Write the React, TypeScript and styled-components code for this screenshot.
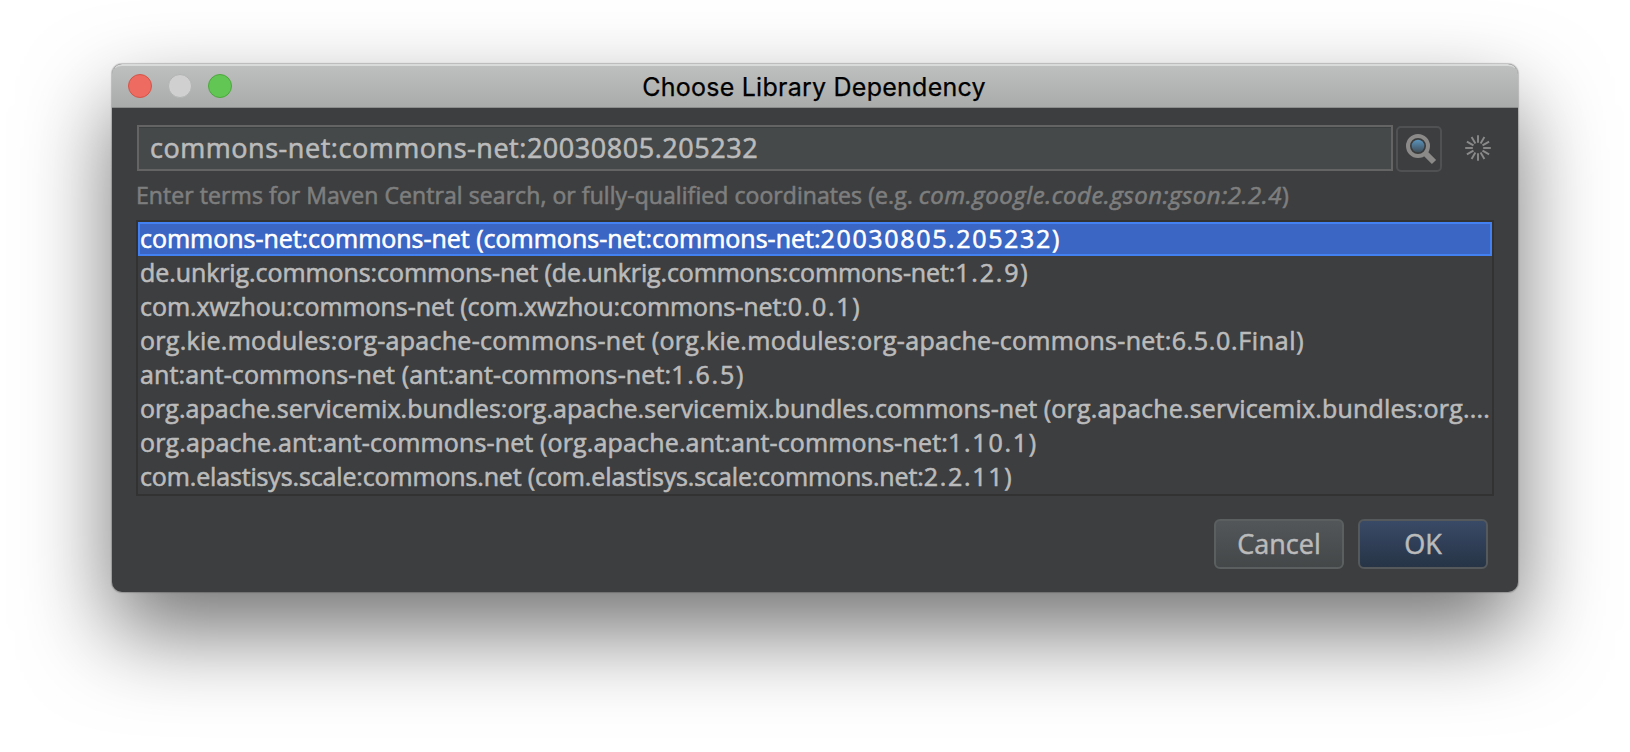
import React from "react";
import styled, { createGlobalStyle } from "styled-components";

const GlobalStyle = createGlobalStyle`
  * { box-sizing: border-box; }
  body { margin: 0; background: #fff; overflow: hidden; }
`;

const uiFont = `"Open Sans", "Noto Sans", sans-serif`;

const Desktop = styled.main`
  width: 1630px;
  height: 752px;
  padding: 64px 112px 0;
  background: #fff;
  font-family: ${uiFont};
  -webkit-text-stroke: 0.6px currentColor;
`;

const Dialog = styled.section`
  width: 1406px;
  height: 528px;
  border-radius: 10px;
  background: #3d3e40;
  box-shadow: 0 0 1px 1px rgba(0, 0, 0, 0.2), 0 40px 88px rgba(0, 0, 0, 0.55);
  display: flex;
  flex-direction: column;
`;

const TitleBar = styled.header`
  height: 44px;
  flex: none;
  display: grid;
  grid-template-columns: 199px 1fr 201px;
  align-items: center;
  border-radius: 10px 10px 0 0;
  background: linear-gradient(#bec0bf, #a9abaa);
  border-top: 2px solid #d9dbda;
  border-bottom: 1px solid #8b8d8c;
`;

const Lights = styled.div`
  display: flex;
  gap: 16px;
  padding: 0 0 1px 16px;
`;

const Light = styled.span<{ $fill: string; $edge: string }>`
  width: 24px;
  height: 24px;
  border-radius: 50%;
  background: ${(p) => p.$fill};
  border: 1px solid ${(p) => p.$edge};
`;

const Title = styled.h1`
  margin: 0;
  text-align: center;
  white-space: nowrap;
  font: 400 25px/34px Inter, sans-serif;
  letter-spacing: 0.25px;
  color: #000;
  -webkit-text-stroke-width: 0.25px;
`;

const Body = styled.div`
  flex: 1;
  display: flex;
  flex-direction: column;
  padding: 17px 24px 0;
`;

const SearchRow = styled.div`
  display: flex;
  align-items: center;
  height: 46px;
  padding-left: 1px;
`;

const Field = styled.div`
  width: 1256px;
  height: 46px;
  border: 2px solid #646464;
  background: #45494a;
  box-shadow: inset 0 1px 0 #3c3f40;
  color: #bbb;
  font-size: 27px;
  letter-spacing: 0.54px;
  line-height: 42px;
  padding-left: 11px;
  white-space: nowrap;
`;

const Part = styled.span<{ $tracking: number }>`
  letter-spacing: ${(p) => p.$tracking}px;
`;

const SearchButton = styled.button`
  width: 46px;
  height: 46px;
  margin: 1px 0 0 3px;
  padding: 0 0 0 3px;
  border: 2px solid #505152;
  border-radius: 5px;
  background: #3d3e40;
  display: grid;
  place-items: center;
`;

const Spinner = styled.svg`
  margin-left: 22px;
  width: 28px;
  height: 28px;
`;

const Hint = styled.p`
  margin: 7px 0 0;
  height: 34px;
  line-height: 34px;
  font-size: 23px;
  letter-spacing: 0.07px;
  color: #7e7e7e;
  white-space: nowrap;
`;

const Example = styled.em`
  font-size: 24px;
  letter-spacing: 0.5px;
`;

const List = styled.ul`
  list-style: none;
  margin: 8px 0 0;
  padding: 0;
  width: 1358px;
  height: 276px;
  border: 2px solid #323233;
`;

const Item = styled.li<{ $selected?: boolean }>`
  height: 34px;
  padding-left: 2px;
  overflow: hidden;
  white-space: nowrap;
  font-size: 25px;
  line-height: 33px;
  color: ${(p) => (p.$selected ? "#fff" : "#bbb")};
  background: ${(p) => (p.$selected ? "#3b66c4" : "transparent")};
  box-shadow: ${(p) => (p.$selected ? "inset 0 0 0 2px #4380f2" : "none")};
`;

const Actions = styled.footer`
  display: flex;
  justify-content: flex-end;
  gap: 14px;
  padding: 23px 6px 0 0;
`;

const Button = styled.button<{ $primary?: boolean }>`
  width: 130px;
  height: 50px;
  padding: 0 0 1px;
  border: 2px solid ${(p) => (p.$primary ? "#55595b" : "#5c5f60")};
  border-radius: 6px;
  background: ${(p) =>
    p.$primary ? "linear-gradient(#3a4b68, #263345)" : "linear-gradient(#53575a, #434748)"};
  background-origin: border-box;
  color: #bbb;
  font: 400 27px/40px ${uiFont};
  -webkit-text-stroke: 0.5px currentColor;
`;

type Segment = [text: string, tracking: number];

const items: Segment[][] = [
  [["commons-net:commons-net ", -0.03], ["(commons-net:commons-net:", 0], ["20030805.205232)", 1.65]],
  [["de.unkrig.commons:commons-net ", -0.08], ["(de.unkrig.commons:commons-net:", -0.12], ["1.2.9)", 1.8]],
  [["com.xwzhou:commons-net ", -0.06], ["(com.xwzhou:commons-net:", -0.06], ["0.0.1)", 1.7]],
  [["org.kie.modules:org-apache-commons-net ", 0.28], ["(org.kie.modules:org-apache-commons-net:", 0.29], ["6.5.0.Final)", 0.66]],
  [["ant:ant-commons-net ", 0.12], ["(ant:ant-commons-net:", 0.13], ["1.6.5)", 1.75]],
  [["org.apache.servicemix.bundles:org.apache.servicemix.bundles.commons-net ", 0.03], ["(org.apache.servicemix.bundles:org....", 0.19]],
  [["org.apache.ant:ant-commons-net ", 0.14], ["(org.apache.ant:ant-commons-net:", 0.15], ["1.10.1)", 1.75]],
  [["com.elastisys.scale:commons.net ", -0.15], ["(com.elastisys.scale:commons.net:", -0.13], ["2.2.11)", 1.7]],
];

function Magnifier() {
  return (
    <svg width="32" height="32" viewBox="0 0 32 32">
      <defs>
        <linearGradient id="lens" x1="0" y1="0" x2="0" y2="1">
          <stop offset="0" stopColor="#5a94bd" />
          <stop offset="1" stopColor="#3f4d58" />
        </linearGradient>
      </defs>
      <path d="M20 20 L29 29" stroke="#8c8a89" strokeWidth="6" />
      <circle cx="13" cy="13" r="10" fill="#3a3b3c" stroke="#8c8a89" strokeWidth="4" />
      <circle cx="13" cy="13" r="6.3" fill="url(#lens)" />
    </svg>
  );
}

function Busy() {
  return (
    <Spinner viewBox="-14 -14 28 28">
      {Array.from({ length: 12 }, (_, i) => (
        <path key={i} d="M0 -5.2V-12.8" stroke="#8a8a8a" strokeWidth="1.9" transform={`rotate(${i * 30})`} />
      ))}
    </Spinner>
  );
}

export default function App() {
  return (
    <Desktop>
      <GlobalStyle />
      <Dialog>
        <TitleBar>
          <Lights>
            <Light $fill="#ed6b60" $edge="#d35549" />
            <Light $fill="#d0d0d0" $edge="#b2b4b3" />
            <Light $fill="#62c655" $edge="#4ea73d" />
          </Lights>
          <Title>Choose Library Dependency</Title>
        </TitleBar>
        <Body>
          <SearchRow>
            <Field>commons-net:commons-net:20030805.205232</Field>
            <SearchButton aria-label="Search"><Magnifier /></SearchButton>
            <Busy />
          </SearchRow>
          <Hint>
            Enter terms for Maven Central search, or fully-qualified coordinates (e.g. <Example>com.google.code.gson:gson:2.2.4</Example>)
          </Hint>
          <List>
            {items.map((segments, i) => (
              <Item key={i} $selected={i === 0}>
                {segments.map(([text, tracking]) => (
                  <Part key={text} $tracking={tracking}>{text}</Part>
                ))}
              </Item>
            ))}
          </List>
          <Actions>
            <Button>Cancel</Button>
            <Button $primary>OK</Button>
          </Actions>
        </Body>
      </Dialog>
    </Desktop>
  );
}
